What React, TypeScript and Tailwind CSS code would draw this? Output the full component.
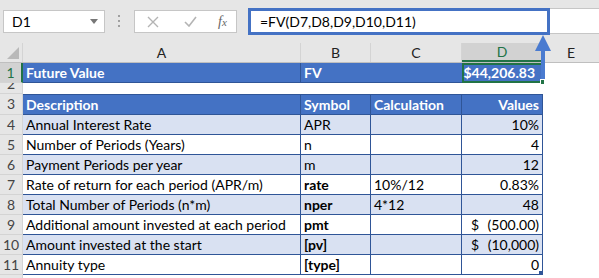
import React from "react"

type Row = {
    n: number
    a: string
    b: string
    c?: string
    d?: string
    acc?: string
    bold?: boolean
    head?: boolean
    shade?: boolean
}

const rows: Row[] = [
    { n: 3, a: "Description", b: "Symbol", c: "Calculation", d: "Values", head: true },
    { n: 4, a: "Annual Interest Rate", b: "APR", d: "10%", shade: true },
    { n: 5, a: "Number of Periods (Years)", b: "n", d: "4" },
    { n: 6, a: "Payment Periods per year", b: "m", d: "12", shade: true },
    { n: 7, a: "Rate of return for each period (APR/m)", b: "rate", c: "10%/12", d: "0.83%", bold: true },
    { n: 8, a: "Total Number of Periods (n*m)", b: "nper", c: "4*12", d: "48", bold: true, shade: true },
    { n: 9, a: "Additional amount invested at each period", b: "pmt", acc: "(500.00)", bold: true },
    { n: 10, a: "Amount invested at the start", b: "[pv]", acc: "(10,000)", bold: true, shade: true },
    { n: 11, a: "Annuity type", b: "[type]", d: "0", bold: true },
]

const RowHead = ({ n, active, h }: { n: number; active?: boolean; h: string }) => (
    <div
        className={`w-[23px] shrink-0 ${h} overflow-hidden flex items-center justify-center border-r border-b border-[#d4d4d4] text-[14px] ${
            active ? "bg-[#d2d2d2] text-[#217346] border-r-2 border-r-[#217346]" : "bg-[#e6e6e6] text-[#444]"
        }`}
    >
        {n}
    </div>
)

export default function App() {
    return (
        <div className="w-[599px] h-[278px] overflow-hidden bg-white relative font-['Lato',sans-serif] text-[14px] text-black leading-none whitespace-nowrap">
            {/* toolbar */}
            <div className="h-[43px] bg-[#e6e6e6] flex items-start">
                <div className="ml-[3px] mt-[10px] w-[102px] h-[23px] bg-white border border-[#c6c6c6] flex items-center pl-[8px] pr-[6px]">
                    <span className="text-[14px]">D1</span>
                    <span className="ml-auto w-0 h-0 border-l-[4px] border-r-[4px] border-t-[5px] border-l-transparent border-r-transparent border-t-[#777]" />
                </div>
                <div className="ml-[13px] mt-[15px] flex flex-col gap-[3px]">
                    <span className="w-[2px] h-[2px] bg-[#a0a0a0]" />
                    <span className="w-[2px] h-[2px] bg-[#a0a0a0]" />
                    <span className="w-[2px] h-[2px] bg-[#a0a0a0]" />
                </div>
                <div className="ml-[14px] mt-[10px] w-[103px] h-[23px] bg-white border border-[#c6c6c6] flex items-center">
                    <svg className="ml-[12px]" width="12" height="12" viewBox="0 0 12 12">
                        <path d="M1 1L11 11M11 1L1 11" stroke="#b4b4b4" strokeWidth="1.4" />
                    </svg>
                    <svg className="ml-[25px]" width="13" height="11" viewBox="0 0 13 11">
                        <path d="M1 6L5 10L12 1" stroke="#b4b4b4" strokeWidth="1.6" fill="none" />
                    </svg>
                    <span className="ml-[21px] text-[14px] italic text-[#666] font-['Liberation_Serif',serif]">
                        f<span className="text-[11px]">x</span>
                    </span>
                </div>
                <div className="ml-[11px] mt-[8px] flex-1 h-[26px] flex bg-white border-y border-[#c6c6c6]">
                    <div className="w-[302px] -my-px h-[27px] border-[3px] border-[#4472c4] flex items-center pl-[9px] text-[14px]">
                        =FV(D7,D8,D9,D10,D11)
                    </div>
                </div>
            </div>

            {/* column headers */}
            <div className="flex h-[20px] bg-[#e6e6e6] border-b border-[#bfbfbf] text-[14px] text-[#222]">
                <div className="w-[23px] shrink-0 border-r border-[#d4d4d4] flex items-end justify-end pr-[3px] pb-[3px]">
                    <svg width="12" height="12" viewBox="0 0 12 12">
                        <path d="M12 0V12H0Z" fill="#b9b9b9" />
                    </svg>
                </div>
                <div className="w-[278px] shrink-0 flex items-center justify-center border-r border-[#d4d4d4]">A</div>
                <div className="w-[70px] shrink-0 flex items-center justify-center border-r border-[#d4d4d4]">B</div>
                <div className="w-[91px] shrink-0 flex items-center justify-center border-r border-[#d4d4d4]">C</div>
                <div className="w-[81px] shrink-0 flex items-center justify-center bg-[#d2d2d2] text-[#217346] border-b-2 border-[#217346] border-r border-r-[#bfbfbf]">
                    D
                </div>
                <div className="flex-1 flex items-center justify-center">E</div>
            </div>

            {/* row 1 */}
            <div className="flex h-[20px]">
                <RowHead n={1} active h="h-[20px]" />
                <div className="w-[278px] shrink-0 bg-[#4472c4] text-white font-bold flex items-center pl-[3px] border-b border-r border-[#2f5597]">
                    Future Value
                </div>
                <div className="w-[161px] shrink-0 bg-[#4472c4] text-white font-bold flex items-center pl-[3px] border-b border-[#2f5597]">
                    FV
                </div>
                <div className="w-[81px] shrink-0 bg-[#4472c4] text-white font-bold flex items-center justify-end pr-[6px] border-2 border-[#217346] relative">
                    $44,206.83
                    <span className="absolute -right-[4px] -bottom-[4px] w-[5px] h-[6px] bg-[#217346] border border-white" />
                </div>
            </div>

            {/* row 2 */}
            <div className="flex h-[11px]">
                <div className="w-[23px] shrink-0 h-[11px] overflow-hidden bg-[#e6e6e6] border-r border-b border-[#d4d4d4] text-[14px] text-[#444] flex justify-center">
                    <span className="-mt-[6px]">2</span>
                </div>
            </div>

            {/* table */}
            {rows.map((r) => {
                const bg = r.head ? "bg-[#4472c4] text-white font-bold" : r.shade ? "bg-[#d9e1f2]" : "bg-white"
                const h = r.head ? "h-[21px] border-t" : "h-[20px]"
                const cell = `shrink-0 flex items-center border-r border-b border-[#2f5597] ${bg} ${h}`
                return (
                    <div className="flex" key={r.n}>
                        <RowHead n={r.n} h={r.head ? "h-[21px]" : "h-[20px]"} />
                        <div className={`w-[278px] pl-[3px] ${cell}`}>{r.a}</div>
                        <div className={`w-[70px] pl-[3px] ${cell} ${r.bold ? "font-bold" : ""}`}>{r.b}</div>
                        <div className={`w-[91px] pl-[3px] ${cell}`}>{r.c}</div>
                        <div className={`w-[81px] pr-[3px] relative ${cell} ${r.acc ? "justify-between pl-[9px]" : "justify-end"}`}>
                            {r.acc ? (
                                <>
                                    <span>$</span>
                                    <span>{r.acc}</span>
                                </>
                            ) : (
                                r.d
                            )}
                            {r.n === 11 && <span className="absolute right-0 bottom-0 w-[3px] h-[3px] bg-[#2f5597]" />}
                        </div>
                    </div>
                )
            })}
            <div className="flex">
                <div className="w-[23px] h-[10px] bg-[#e6e6e6] border-r border-[#d4d4d4]" />
            </div>

            {/* annotation arrow */}
            <svg className="absolute left-[534px] top-[33px]" width="20" height="48" viewBox="0 0 20 48">
                <path d="M9 2L17 18H1Z" fill="#4a7bd0" />
                <rect x="7" y="16" width="4" height="30" fill="#4a7bd0" />
            </svg>
        </div>
    )
}
